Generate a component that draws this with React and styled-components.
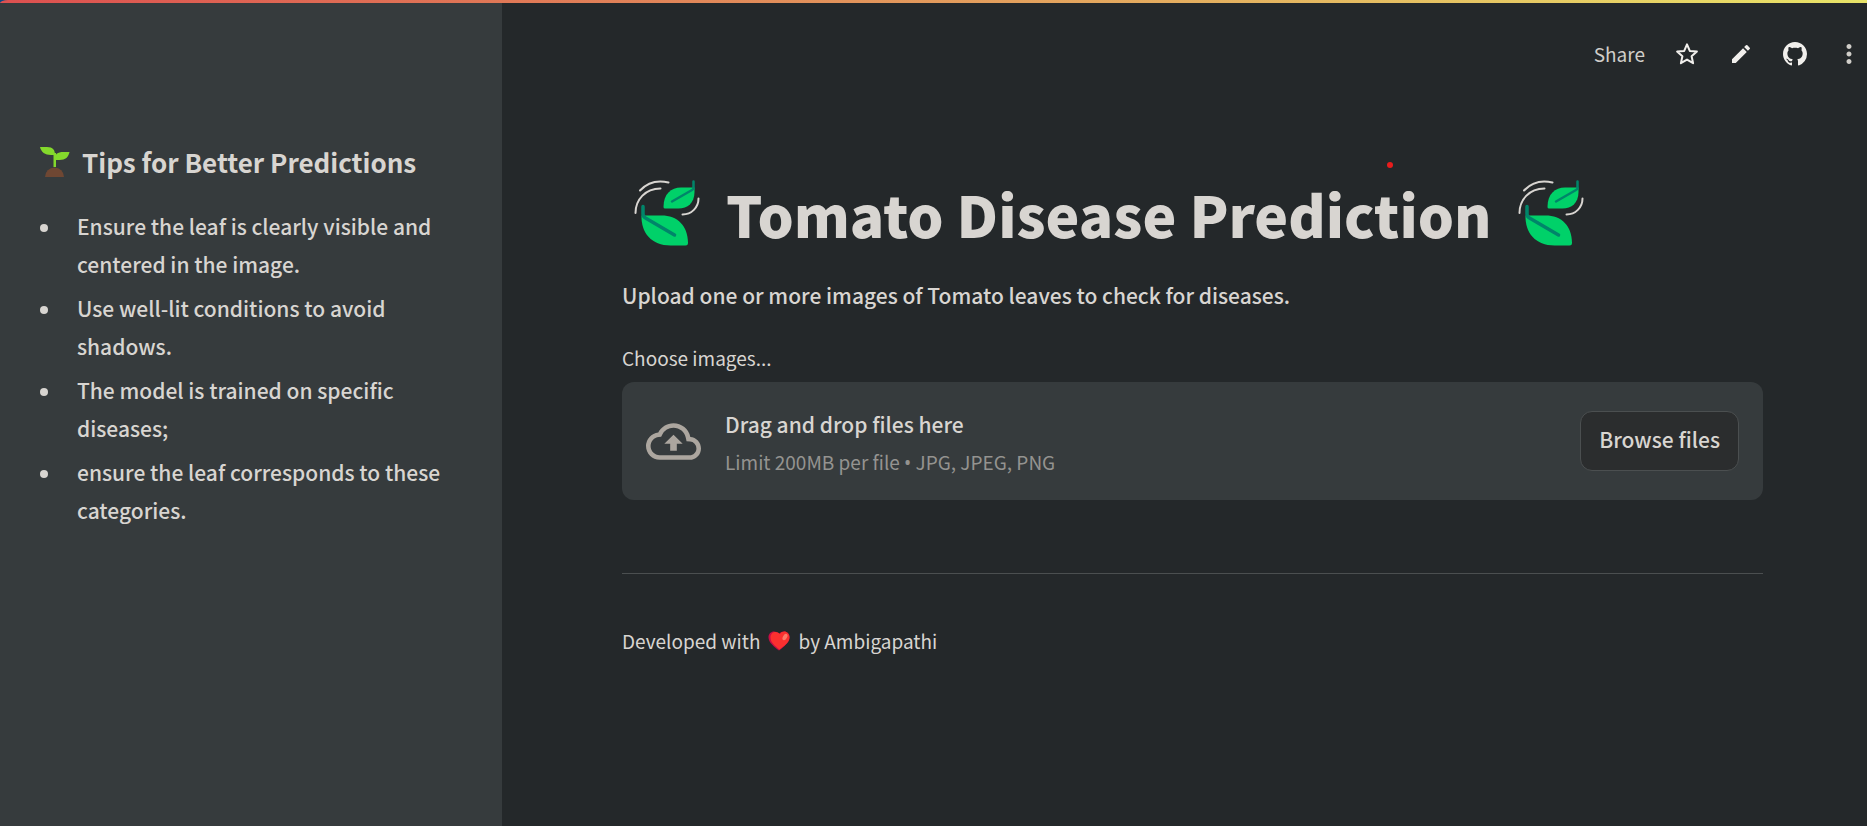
import React from 'react';
import styled, { createGlobalStyle } from 'styled-components';
import { MdEdit, MdMoreVert, MdOutlineCloudUpload } from 'react-icons/md';

const GlobalStyle = createGlobalStyle`
  * { box-sizing: border-box; }
  body {
    margin: 0;
    background: #24282a;
    color: #d8d5d1;
    font-family: "Noto Sans CJK SC", "Noto Sans", sans-serif;
    font-size: 21px;
    font-weight: 500;
    line-height: 38px;
  }
  button { font: inherit; color: inherit; cursor: pointer; }
`;

const Page = styled.div`
  display: flex;
  flex-direction: column;
  min-height: 100vh;
`;

const Decoration = styled.div`
  height: 3px;
  background: #0b4a80;
  &::before {
    content: "";
    display: block;
    height: 100%;
    border-top-left-radius: 8px 3px;
    background: linear-gradient(90deg, #dd5050, #e8e468);
  }
`;

const Columns = styled.div`
  display: flex;
  flex: 1;
`;

const Sidebar = styled.aside`
  flex: 0 0 502px;
  padding: 138px 40px 40px;
  background: #363b3d;
`;

const SidebarTitle = styled.h2`
  display: flex;
  align-items: center;
  gap: 12px;
  margin: 0 0 24px;
  font-size: 26px;
  font-weight: 700;
  line-height: 42px;
`;

const TipList = styled.ul`
  display: grid;
  gap: 6px;
  margin: 0;
  padding: 0;
  list-style: none;
`;

const Tip = styled.li`
  display: flex;
  gap: 29px;
  &::before {
    content: "";
    flex: 0 0 8px;
    height: 8px;
    margin-top: 17px;
    border-radius: 50%;
    background: #d8d5d1;
  }
`;

const Main = styled.main`
  flex: 1;
  min-width: 0;
  display: flex;
  flex-direction: column;
`;

const Toolbar = styled.header`
  display: flex;
  justify-content: flex-end;
  align-items: center;
  height: 102px;
  gap: 24px;
  padding: 0 3px;
`;

const ToolButton = styled.button`
  display: flex;
  align-items: center;
  justify-content: center;
  min-width: 30px;
  height: 30px;
  padding: 0;
  border: 0;
  background: none;
  color: ${(p) => (p.$dim ? '#d0cec9' : '#f1efec')};
  font-size: 19px;
  font-weight: 400;
  line-height: 28px;
`;

const ShareButton = styled(ToolButton)`
  margin-right: 3px;
`;

const Content = styled.div`
  padding: 60px 104px 40px 120px;
`;

const TitleWrap = styled.div`
  position: relative;
`;

const RecordingDot = styled.span`
  position: absolute;
  top: -3px;
  left: 765px;
  width: 6px;
  height: 6px;
  border-radius: 50%;
  background: #e81c1c;
`;

const Title = styled.h1`
  display: flex;
  align-items: center;
  gap: 26px;
  margin: 0 0 15px;
  padding: 0 12px;
  font-size: 57px;
  font-weight: 900;
  line-height: 96px;
`;

const Intro = styled.p`
  margin: 0 0 28px;
`;

const FieldLabel = styled.label`
  display: block;
  margin-bottom: 8px;
  font-size: 19px;
  font-weight: 400;
  line-height: 32px;
`;

const Dropzone = styled.section`
  display: flex;
  align-items: center;
  gap: 24px;
  padding: 19px 24px;
  border-radius: 12px;
  background: #363b3d;
  svg { flex: none; color: #aca69f; }
`;

const DropText = styled.div`
  flex: 1;
  padding-top: 4px;
`;

const Hint = styled.small`
  display: block;
  color: #949390;
  font-size: 19px;
  font-weight: 400;
`;

const Bullet = styled.span`
  font-family: "Noto Sans", sans-serif;
  line-height: 1;
`;

const HiddenFile = styled.input`
  display: none;
`;

const BrowseButton = styled.button`
  height: 60px;
  padding: 0 18px 4px;
  border: 1px solid #4b4f50;
  border-radius: 12px;
  background: #2b2d2e;
`;

const Divider = styled.hr`
  margin: 73px 0 48px;
  border: 0;
  border-top: 1px solid #4b4f50;
`;

const Footer = styled.footer`
  display: flex;
  align-items: center;
  gap: 8px;
  font-size: 19px;
  font-weight: 400;
`;

const StarOutline = () => (
  <svg width="24" height="24" viewBox="0 0 24 24" fill="none" stroke="currentColor" strokeWidth="2" strokeLinejoin="round" aria-hidden="true">
    <path d="M12 2.400l2.800 6.500 7.100.7-5.300 4.700 1.500 6.900-6.100-3.600-6.100 3.600 1.500-6.900-5.300-4.700 7.100-.7z" />
  </svg>
);

const GithubMark = () => (
  <svg width="24" height="24" viewBox="0 0 16 16" fill="currentColor" aria-hidden="true">
    <path d="M8 0C3.580 0 0 3.580 0 8c0 3.540 2.290 6.530 5.470 7.590.4.070.55-.17.55-.38 0-.19-.01-.82-.01-1.490-2.010.37-2.530-.49-2.690-.94-.09-.23-.48-.94-.82-1.130-.28-.15-.68-.52-.01-.53.63-.01 1.080.58 1.230.82.72 1.210 1.870.87 2.330.66.07-.52.28-.87.51-1.070-1.780-.2-3.640-.89-3.640-3.950 0-.87.31-1.590.82-2.150-.08-.2-.36-1.020.08-2.120 0 0 .67-.21 2.200.82.64-.18 1.320-.27 2-.27.68 0 1.360.09 2 .27 1.530-1.040 2.200-.82 2.200-.82.44 1.100.16 1.920.08 2.120.51.56.82 1.270.82 2.150 0 3.070-1.870 3.750-3.650 3.950.29.25.54.73.54 1.480 0 1.070-.01 1.930-.01 2.200 0 .21.15.46.55.38A8.010 8.010 0 0 0 16 8c0-4.420-3.580-8-8-8z" />
  </svg>
);

const Seedling = () => (
  <svg width="30" height="32" viewBox="0 0 30 32" aria-hidden="true">
    <path d="M5 31a9.500 9.500 0 0 1 19 0z" fill="#6f4733" />
    <path d="M13.500 21V7h2.500v14z" fill="#84d92c" />
    <path d="M0 1h7c6 0 8 3 8 8h-4C5 9 1 6 0 1z" fill="#84d92c" />
    <path d="M29.500 6h-6c-6 0-9 2-9 8h5c6 0 9-3 10-8z" fill="#84d92c" />
  </svg>
);

const Leaves = () => (
  <svg width="66" height="66" viewBox="0 0 66 66" fill="none" strokeLinecap="round" aria-hidden="true">
    <g stroke="#d8d5d1" strokeWidth="2">
      <path d="M6 10.500C14 2 24 0 34.500 2.500" />
      <path d="M1.500 33C1.500 20 11 8.500 26.500 8.500" />
      <path d="M48.500 34.500c9 0 16-7 16-16" />
    </g>
    <path d="M31 28.500q-1.500 0-1.500-1.500C29.500 14 37 7.500 47 7.500h13.500v4.500c0 11-7 16.500-16 16.500z" fill="#00d169" />
    <path d="M7.500 35.500h20c16 0 26 10 26.500 27 0 2-.5 3-2.500 3H36.500C17.500 65.500 7 53 7.500 35.500z" fill="#00d169" />
    <path d="M59.500 1.500V8c0 1-.5 1.500-1.500 2L38 21.500" stroke="#00856a" strokeWidth="2.500" />
    <path d="M9 26.500V34c0 2 .5 3 2.500 4l29 17" stroke="#00856a" strokeWidth="3.500" />
  </svg>
);

const Heart = () => (
  <svg width="22" height="20" viewBox="0 0 22 20" aria-hidden="true">
    <path d="M11 3C7-1.500.5.500.5 6.500c0 5 6 9.500 10.500 13 4.500-3.500 10.500-8 10.500-13C21.500.5 15-1.500 11 3z" fill="#c90d45" />
    <path d="M12 3C9-.5 2.500.500 2.500 6.500c0 5 4.500 8.500 9 12 4.500-3.500 10-7 10-12C21.500.5 15-1.500 12 3z" fill="#fa302f" />
    <ellipse cx="17" cy="6" rx="2" ry="3.500" transform="rotate(30 17 6)" fill="#fd7a68" />
  </svg>
);

const tips = [
  'Ensure the leaf is clearly visible and centered in the image.',
  'Use well-lit conditions to avoid shadows.',
  'The model is trained on specific diseases;',
  'ensure the leaf corresponds to these categories.',
];

export default function App() {
  const fileInput = React.useRef(null);
  return (
    <Page>
      <GlobalStyle />
      <Decoration />
      <Columns>
        <Sidebar>
          <SidebarTitle><Seedling />Tips for Better Predictions</SidebarTitle>
          <TipList>
            {tips.map((tip) => <Tip key={tip}>{tip}</Tip>)}
          </TipList>
        </Sidebar>
        <Main>
          <Toolbar>
            <ShareButton $dim>Share</ShareButton>
            <ToolButton aria-label="Favorite"><StarOutline /></ToolButton>
            <ToolButton aria-label="Edit"><MdEdit size={24} /></ToolButton>
            <ToolButton aria-label="View source"><GithubMark /></ToolButton>
            <ToolButton $dim aria-label="More options"><MdMoreVert size={30} /></ToolButton>
          </Toolbar>
          <Content>
            <TitleWrap>
              <RecordingDot />
              <Title><Leaves />Tomato Disease Prediction<Leaves /></Title>
            </TitleWrap>
            <Intro>Upload one or more images of Tomato leaves to check for diseases.</Intro>
            <FieldLabel htmlFor="images">Choose images...</FieldLabel>
            <Dropzone>
              <MdOutlineCloudUpload size={55} />
              <DropText>
                Drag and drop files here
                <Hint>Limit 200MB per file <Bullet>•</Bullet> JPG, JPEG, PNG</Hint>
              </DropText>
              <HiddenFile ref={fileInput} id="images" type="file" accept=".jpg,.jpeg,.png" multiple />
              <BrowseButton type="button" onClick={() => fileInput.current.click()}>Browse files</BrowseButton>
            </Dropzone>
            <Divider />
            <Footer>Developed with <Heart /> by Ambigapathi</Footer>
          </Content>
        </Main>
      </Columns>
    </Page>
  );
}
